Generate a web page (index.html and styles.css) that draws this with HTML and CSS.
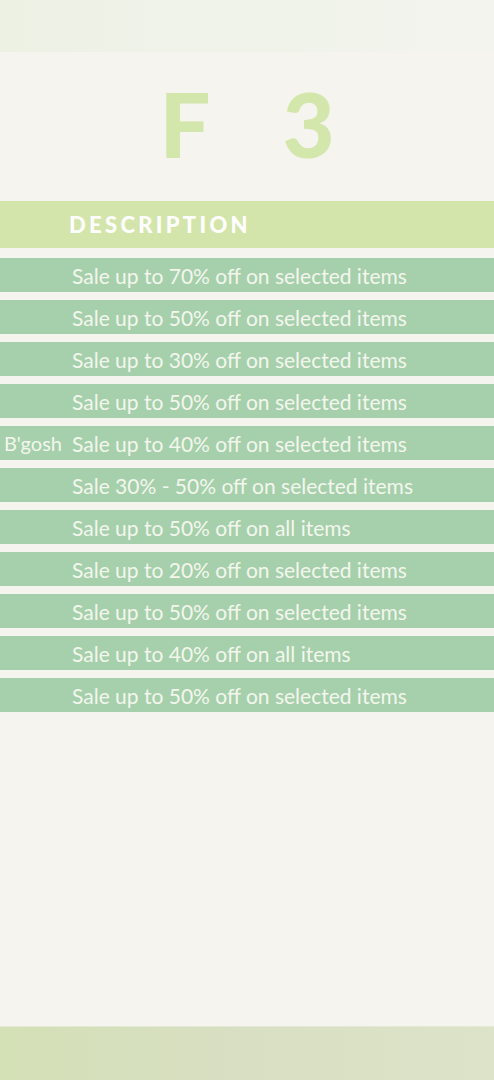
FILE: index.html
```html
<!DOCTYPE html>
<html lang="en">
<head>
<meta charset="utf-8">
<title>Sales</title>
<link rel="stylesheet" href="styles.css">
</head>
<body>
<div class="page">
  <div class="topband"></div>
  <div class="title"><span>F</span><span>3</span></div>
  <div class="sales">
    <div class="row head"><div class="brand"></div><div class="desc">DESCRIPTION</div></div>
    <div class="row"><div class="brand"></div><div class="desc">Sale up to 70% off on selected items</div></div>
    <div class="row"><div class="brand"></div><div class="desc">Sale up to 50% off on selected items</div></div>
    <div class="row"><div class="brand"></div><div class="desc">Sale up to 30% off on selected items</div></div>
    <div class="row"><div class="brand"></div><div class="desc">Sale up to 50% off on selected items</div></div>
    <div class="row"><div class="brand">B'gosh</div><div class="desc">Sale up to 40% off on selected items</div></div>
    <div class="row"><div class="brand"></div><div class="desc">Sale 30% - 50% off on selected items</div></div>
    <div class="row"><div class="brand"></div><div class="desc">Sale up to 50% off on all items</div></div>
    <div class="row"><div class="brand"></div><div class="desc">Sale up to 20% off on selected items</div></div>
    <div class="row"><div class="brand"></div><div class="desc">Sale up to 50% off on selected items</div></div>
    <div class="row"><div class="brand"></div><div class="desc">Sale up to 40% off on all items</div></div>
    <div class="row"><div class="brand"></div><div class="desc">Sale up to 50% off on selected items</div></div>
  </div>
  <div class="spacer"></div>
  <div class="footer"></div>
</div>
</body>
</html>
```

FILE: styles.css
```css
html, body {
  margin: 0;
  padding: 0;
  background: #f5f4ef;
}
.page {
  height: 1080px;
  display: flex;
  flex-direction: column;
  font-family: Lato, "Open Sans", sans-serif;
}
.topband {
  height: 52px;
  flex: none;
  background: linear-gradient(90deg, #edf1e4 0%, #f0f3ea 50%, #f3f4ee 100%);
}
.title {
  height: 149px;
  flex: none;
  display: flex;
  justify-content: center;
  align-items: flex-start;
  gap: 72px;
  color: #d3e6ab;
  font-weight: 900;
  font-size: 90px;
  line-height: 1;
  padding-top: 26px;
  box-sizing: border-box;
}
.sales {
  display: flex;
  flex-direction: column;
  gap: 8px;
}
.row {
  display: flex;
  align-items: center;
  height: 34px;
  background: #a5d0ab;
  color: #f4f6ee;
  font-size: 21px;
}
.row.head {
  height: 47px;
  background: #d4e5ab;
  margin-bottom: 2px;
  color: #ffffff;
  font-weight: 900;
  font-size: 22px;
  letter-spacing: 3.3px;
}
.brand {
  width: 62px;
  flex: none;
  text-align: right;
  font-size: 20px;
}
.desc {
  padding-left: 10px;
  white-space: nowrap;
}
.head .desc {
  padding-left: 7px;
}
.spacer {
  flex: 1;
}
.footer {
  height: 53px;
  flex: none;
  background: linear-gradient(90deg, #d4e0b6 0%, #d8dfc3 50%, #dde3c8 100%);
  border-top: 1px solid #e4e9d6;
}
```
